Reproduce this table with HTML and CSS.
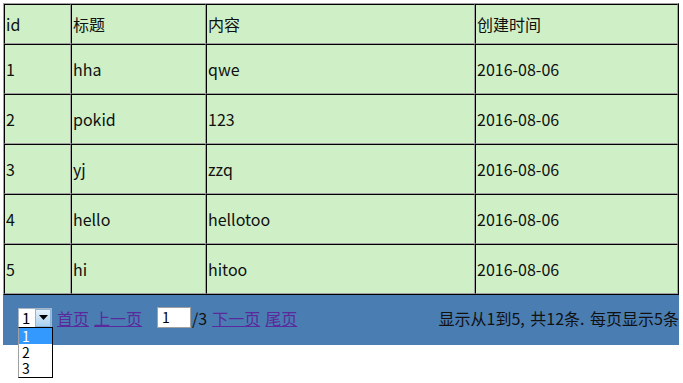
FILE: index.html
```html
<!DOCTYPE html>
<html lang="zh-CN">
<head>
<meta charset="utf-8">
<title>列表</title>
<link rel="stylesheet" href="styles.css">
</head>
<body>
<table class="grid">
  <colgroup>
    <col class="c1"><col class="c2"><col class="c3"><col class="c4">
  </colgroup>
  <tr class="head"><td>id</td><td>标题</td><td>内容</td><td>创建时间</td></tr>
  <tr><td>1</td><td>hha</td><td>qwe</td><td>2016-08-06</td></tr>
  <tr><td>2</td><td>pokid</td><td>123</td><td>2016-08-06</td></tr>
  <tr><td>3</td><td>yj</td><td>zzq</td><td>2016-08-06</td></tr>
  <tr><td>4</td><td>hello</td><td>hellotoo</td><td>2016-08-06</td></tr>
  <tr><td>5</td><td>hi</td><td>hitoo</td><td>2016-08-06</td></tr>
</table>
<div class="pager">
  <div class="select">
    <span class="sel-val">1</span>
    <span class="sel-btn"><svg width="9" height="5" viewBox="0 0 9 5"><path d="M0 0h9L4.5 5z" fill="#000"/></svg></span>
    <ul class="sel-list">
      <li class="on">1</li>
      <li>2</li>
      <li>3</li>
    </ul>
  </div>
  <a href="#" class="lnk first">首页</a>
  <a href="#" class="lnk">上一页</a>
  <span class="jump">1</span>
  <span class="total">/3</span>
  <a href="#" class="lnk">下一页</a>
  <a href="#" class="lnk">尾页</a>
  <span class="info">显示从1到5, 共12条. 每页显示5条</span>
</div>
</body>
</html>
```
FILE: styles.css
```css
html, body {
  margin: 0;
  padding: 0;
  background: #fff;
}
body {
  min-height: 383px;
  box-sizing: border-box;
  padding: 3px 0 0 3px;
  font-family: "Noto Sans CJK SC", "Noto Sans", sans-serif;
  font-size: 16px;
  color: #111;
}
.grid {
  width: 676px;
  border-collapse: separate;
  border-spacing: 0;
  border-top: 1px solid #a0a0a0;
  border-left: 1px solid #a0a0a0;
  border-right: 1px solid #000;
  border-bottom: 1px solid #000;
  background: #cff0c6;
  table-layout: fixed;
}
.c1 { width: 67px; }
.c2 { width: 135px; }
.c3 { width: 269px; }
.c4 { width: 203px; }
.grid td {
  box-sizing: border-box;
  height: 50px;
  padding: 0 1px;
  border-top: 1px solid #000;
  border-left: 1px solid #000;
  border-right: 1px solid #a0a0a0;
  border-bottom: 1px solid #a0a0a0;
  vertical-align: middle;
  line-height: 20px;
  white-space: nowrap;
}
.grid .head td {
  height: 40px;
}
.pager {
  position: relative;
  width: 676px;
  height: 50px;
  background: #4a7db2;
  display: flex;
  align-items: center;
  box-sizing: border-box;
  padding: 0 0 5px 15px;
  line-height: 20px;
}
.select {
  position: relative;
  z-index: 5;
  width: 34px;
  height: 20px;
  box-sizing: border-box;
  background: #fff;
  border: 1px solid #a9b6c5;
  display: flex;
  font-size: 15px;
}
.sel-val {
  flex: 1;
  padding-left: 3px;
  line-height: 18px;
  color: #000;
}
.sel-btn {
  width: 16px;
  height: 18px;
  box-sizing: border-box;
  border: 1px solid #8fb4d6;
  background: linear-gradient(#e6f2fb, #a9d1f1);
  display: flex;
  align-items: center;
  justify-content: center;
}
.sel-list {
  position: absolute;
  z-index: 10;
  left: -1px;
  top: 18px;
  width: 35px;
  margin: 0;
  padding: 0 0 1px 0;
  list-style: none;
  background: #fff;
  border: 1px solid #000;
  border-left-color: #a0a0a0;
  box-sizing: border-box;
  font-size: 14px;
  line-height: 16px;
}
.sel-list li {
  padding-left: 3px;
  height: 16px;
  color: #000;
}
.sel-list li.on {
  background: #3399ff;
  color: #fff;
}
.lnk {
  color: #5a2a9c;
  text-decoration: underline;
  margin-left: 5px;
}
.jump {
  margin-left: 15px;
  width: 34px;
  height: 21px;
  box-sizing: border-box;
  background: #fff;
  border: 1px solid #a0a0a0;
  font-size: 14px;
  line-height: 19px;
  padding-left: 4px;
  color: #000;
}
.total {
  margin-left: 1px;
  color: #111;
}
.info {
  margin-left: auto;
  color: #111;
  white-space: nowrap;
  word-spacing: 2px;
}
```
